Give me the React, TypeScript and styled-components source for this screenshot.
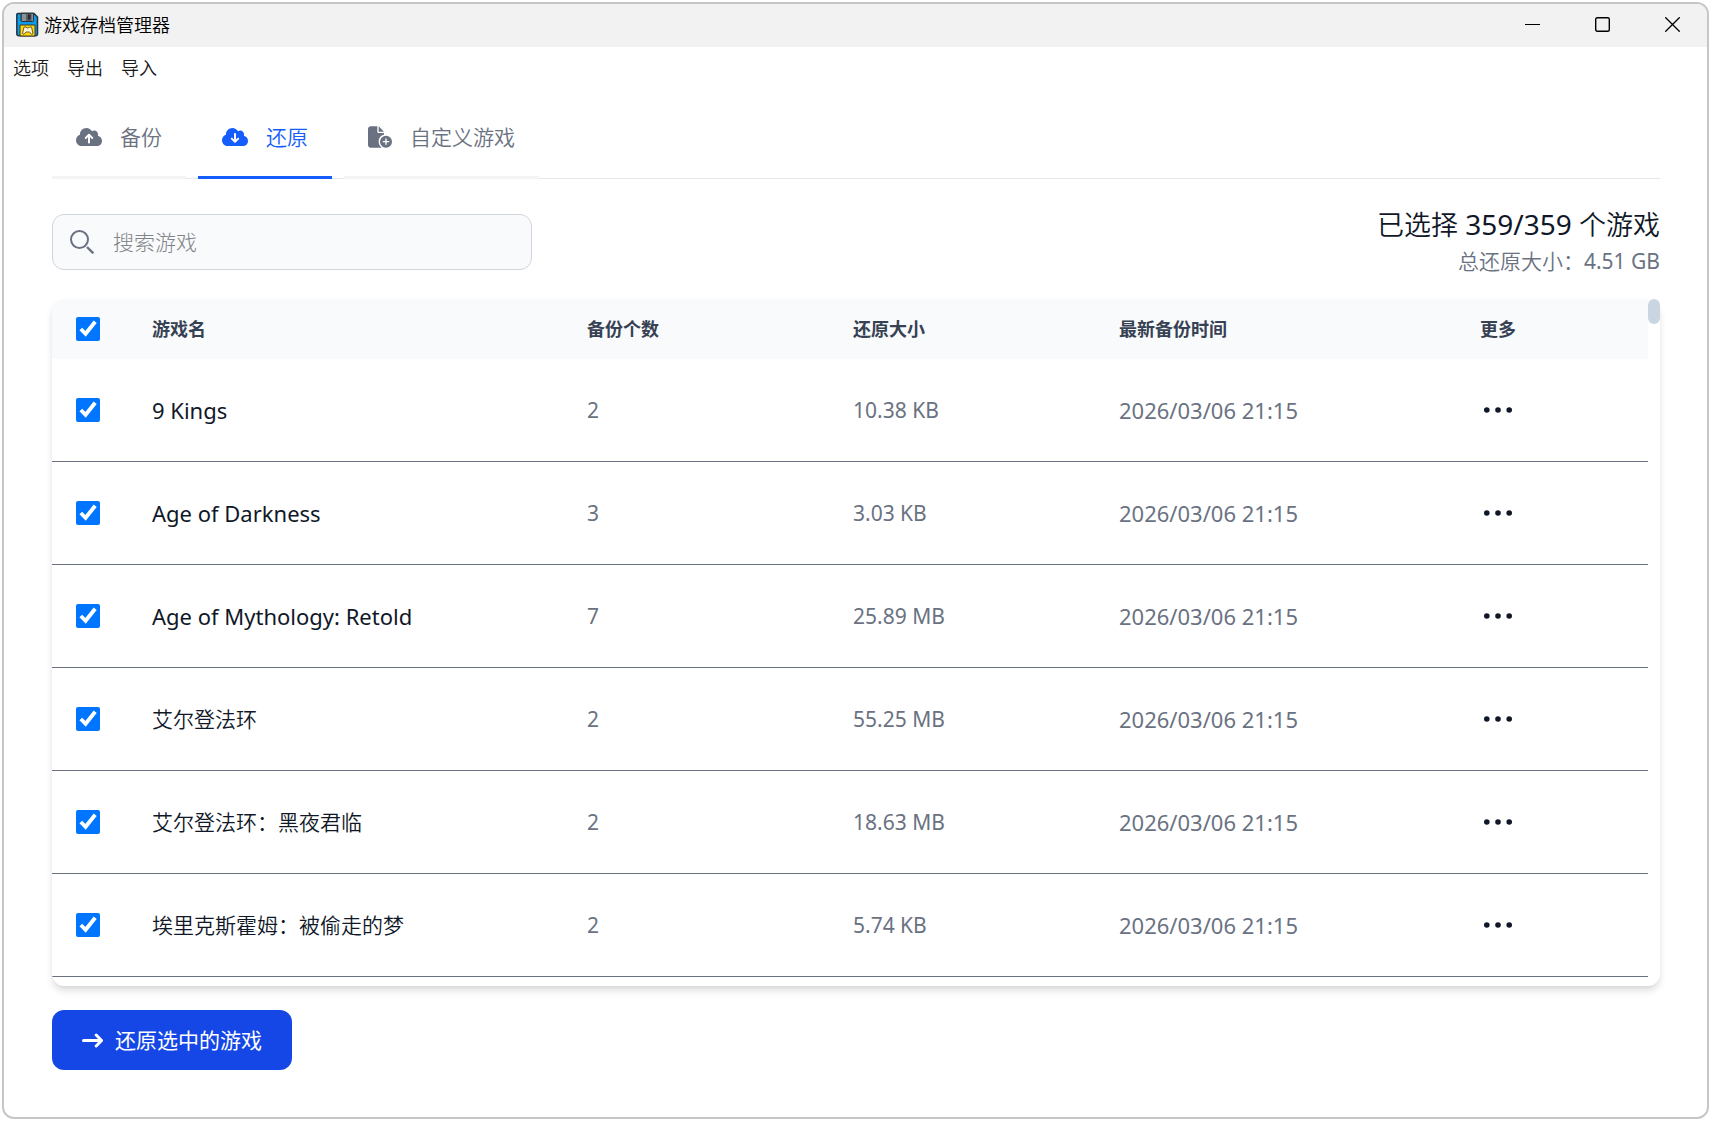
import React, { useState } from "react";
import styled, { createGlobalStyle } from "styled-components";
import { FaCloudArrowUp, FaCloudArrowDown, FaFileCirclePlus } from "react-icons/fa6";

const GlobalStyle = createGlobalStyle`
  *, *::before, *::after { box-sizing: border-box; }
  body {
    margin: 0;
    background: #ffffff;
    font-family: "Noto Sans", "Noto Sans CJK SC", sans-serif;
    color: #101828;
  }
  button, input { font: inherit; color: inherit; }
`;

const Window = styled.div`
  display: flex;
  flex-direction: column;
  height: calc(100vh - 4px);
  min-height: 600px;
  margin: 2px;
  border: 2px solid #c6c6c6;
  border-radius: 12px;
  background: #ffffff;
  overflow: hidden;
`;

const TitleBar = styled.header`
  display: flex;
  align-items: center;
  gap: 5px;
  height: 43px;
  padding: 0 0 2px 12px;
  background: #f2f2f2;
  flex: none;
`;

const Title = styled.h1`
  flex: 1;
  margin: 0;
  font-size: 18px;
  line-height: 24px;
  font-weight: 350;
  color: #000000;
`;

const CaptionButtons = styled.div`
  display: flex;
`;

const CaptionButton = styled.button`
  display: flex;
  align-items: center;
  justify-content: center;
  width: 70px;
  height: 40px;
  padding: 0;
  border: 0;
  background: transparent;
  color: #000000;
`;

const MenuBar = styled.nav`
  display: flex;
  gap: 18px;
  padding: 9px 9px 7px;
  flex: none;
`;

const MenuItem = styled.button`
  padding: 0;
  border: 0;
  background: transparent;
  font-size: 18px;
  line-height: 24px;
  font-weight: 350;
  color: #1b1b1b;
`;

const Main = styled.main`
  display: flex;
  flex-direction: column;
  flex: 1;
  min-height: 0;
  padding: 12px 47px 47px 48px;
`;

const Tabs = styled.div`
  display: flex;
  gap: 12px;
  box-shadow: inset 0 -1px 0 #e5e7eb;
  flex: none;
`;

const Tab = styled.button<{ $active?: boolean }>`
  display: flex;
  align-items: center;
  gap: 18px;
  height: 80px;
  padding: 0 24px 2px;
  border: 0;
  border-bottom: 3px solid ${(p) => (p.$active ? "#155dfc" : "#f3f4f6")};
  background: transparent;
  color: ${(p) => (p.$active ? "#155dfc" : "#6a7282")};
  font-size: 21px;
  line-height: 30px;
  font-weight: 350;
`;

const Toolbar = styled.div`
  display: flex;
  align-items: center;
  justify-content: space-between;
  height: 120px;
  flex: none;
`;

const SearchField = styled.label`
  display: flex;
  align-items: center;
  align-self: flex-end;
  gap: 19px;
  width: 480px;
  height: 56px;
  margin-bottom: 29px;
  padding: 0 17px;
  border: 1px solid #d1d5dc;
  border-radius: 12px;
  background: #f9fafb;
  color: #6a7282;
`;

const SearchInput = styled.input`
  flex: 1;
  min-width: 0;
  padding: 0;
  border: 0;
  outline: 0;
  background: transparent;
  font-size: 21px;
  line-height: 30px;
  font-weight: 300;
  color: #101828;
  &::placeholder { color: #808389; opacity: 1; }
`;

const Summary = styled.div`
  text-align: right;
  font-weight: 350;
`;

const SelectedCount = styled.h2`
  margin: 0;
  font-size: 27px;
  line-height: 42px;
  font-weight: 350;
`;

const TotalSize = styled.p`
  margin: 0;
  font-size: 21px;
  line-height: 30px;
  color: #6a7282;
`;

const Figures = styled.span<{ $large?: boolean }>`
  font-size: ${(p) => (p.$large ? "28px" : "21px")};
  font-weight: 400;
`;

const TableCard = styled.div`
  display: flex;
  flex: 1;
  min-height: 0;
  border-radius: 12px;
  background: #ffffff;
  box-shadow: 0 6px 9px -1px rgba(0, 0, 0, 0.1), 0 3px 6px -2px rgba(0, 0, 0, 0.1);
`;

const TableViewport = styled.div`
  flex: 1;
  min-width: 0;
  border-radius: 12px 0 0 12px;
  overflow: hidden;
`;

const ScrollTrack = styled.div`
  width: 12px;
  flex: none;
`;

const ScrollThumb = styled.div`
  height: 25px;
  border-radius: 6px;
  background: #cad5e2;
`;

const Table = styled.table`
  width: 100%;
  table-layout: fixed;
  border-collapse: separate;
  border-spacing: 0;
  text-align: left;
`;

const Col = styled.col<{ $width: string }>`
  width: ${(p) => p.$width};
`;

const HeadCell = styled.th`
  height: 60px;
  padding: 0 24px;
  background: #f9fafb;
  font-size: 18px;
  line-height: 24px;
  font-weight: 700;
  color: #364153;
`;

const Cell = styled.td<{ $strong?: boolean; $wide?: boolean }>`
  height: 103px;
  padding: 0 24px;
  border-bottom: 1px solid #6a7282;
  font-size: ${(p) => (p.$wide ? "22px" : "21px")};
  line-height: 30px;
  color: ${(p) => (p.$strong ? "#101828" : "#6a7282")};
  white-space: nowrap;
  &:lang(zh) { font-weight: 350; }
`;

const Checkbox = styled.input`
  display: block;
  width: 24px;
  height: 24px;
  margin: 0;
  accent-color: #0075ff;
`;

const MoreButton = styled.button`
  display: flex;
  align-items: center;
  padding: 0;
  border: 0;
  background: transparent;
  color: #101828;
`;

const RestoreButton = styled.button`
  display: flex;
  align-items: center;
  align-self: flex-start;
  gap: 12px;
  height: 60px;
  margin-top: 24px;
  padding: 0 30px;
  border: 0;
  border-radius: 12px;
  background: #1447e6;
  color: #ffffff;
  font-size: 21px;
  line-height: 30px;
  flex: none;
`;

const AppIcon = () => (
  <svg width="23" height="25" viewBox="0 0 23 25" aria-hidden="true">
    <path d="M2 1.5h16l3.5 3.5v17a1.8 1.8 0 0 1-1.8 1.8H2.6a1.8 1.8 0 0 1-1.8-1.8V2.5A1 1 0 0 1 2 1.500z" fill="#0c9bea" stroke="#27343f" strokeWidth="1.500" />
    <path d="M5 1.200h12.500v7.300a1 1 0 0 1-1 1H6a1 1 0 0 1-1-1z" fill="#5b5f63" stroke="#27343f" />
    <path d="M6 2h4v7H6zM15.500 2h1.500v7h-1.500z" fill="#8c9195" />
    <rect x="12" y="2.500" width="2.500" height="5" fill="#24292e" />
    <path d="M4 13h15v11H4z" fill="#ffd90d" stroke="#3b3a28" />
    <path d="M8 15h2l1 1h1.500l1-1h2l1.500 6.500-1.500.8-2-2.300h-3.500l-2 2.300-1.500-.8z" fill="#fff3d4" stroke="#6f5d28" />
  </svg>
);

const MinimizeIcon = () => (
  <svg width="15" height="15" viewBox="0 0 15 15" fill="none" stroke="currentColor" aria-hidden="true">
    <path d="M0 7.500h15" />
  </svg>
);

const MaximizeIcon = () => (
  <svg width="15" height="15" viewBox="0 0 15 15" fill="none" stroke="currentColor" strokeWidth="1.400" aria-hidden="true">
    <rect x=".7" y=".7" width="13.600" height="13.600" rx="1.500" />
  </svg>
);

const CloseIcon = () => (
  <svg width="15" height="15" viewBox="0 0 15 15" fill="none" stroke="currentColor" strokeWidth="1.300" aria-hidden="true">
    <path d="M.3.3l14.400 14.400M14.700.3L.3 14.700" />
  </svg>
);

const SearchIcon = () => (
  <svg width="24" height="24" viewBox="0 0 24 24" fill="none" stroke="currentColor" strokeWidth="2" aria-hidden="true">
    <circle cx="9.500" cy="9.500" r="8.500" />
    <path d="M17 17l6.300 6.300" strokeWidth="2.400" />
  </svg>
);

const MoreIcon = () => (
  <svg width="36" height="36" viewBox="0 0 36 36" fill="currentColor" aria-hidden="true">
    <circle cx="6.800" cy="18" r="2.800" />
    <circle cx="18" cy="18" r="2.800" />
    <circle cx="29.200" cy="18" r="2.800" />
  </svg>
);

const ArrowIcon = () => (
  <svg width="21" height="15" viewBox="0 0 21 15" fill="none" stroke="currentColor" strokeWidth="3" strokeLinecap="round" strokeLinejoin="round" aria-hidden="true">
    <path d="M1.500 7.500h18M14.200 2l5.300 5.500L14.200 13" />
  </svg>
);

const games = [
  { name: "9 Kings", lang: "en", backups: 2, size: "10.38 KB" },
  { name: "Age of Darkness", lang: "en", backups: 3, size: "3.03 KB" },
  { name: "Age of Mythology: Retold", lang: "en", backups: 7, size: "25.89 MB" },
  { name: "艾尔登法环", lang: "zh", backups: 2, size: "55.25 MB" },
  { name: "艾尔登法环：黑夜君临", lang: "zh", backups: 2, size: "18.63 MB" },
  { name: "埃里克斯霍姆：被偷走的梦", lang: "zh", backups: 2, size: "5.74 KB" },
];

const latestBackup = "2026/03/06 21:15";

export default function App() {
  const [checked, setChecked] = useState(games.map(() => true));
  const toggle = (index: number) =>
    setChecked((values) => values.map((value, i) => (i === index ? !value : value)));
  const allChecked = checked.every(Boolean);

  return (
    <>
      <GlobalStyle />
      <Window>
        <TitleBar>
          <AppIcon />
          <Title>游戏存档管理器</Title>
          <CaptionButtons>
            <CaptionButton aria-label="最小化"><MinimizeIcon /></CaptionButton>
            <CaptionButton aria-label="最大化"><MaximizeIcon /></CaptionButton>
            <CaptionButton aria-label="关闭"><CloseIcon /></CaptionButton>
          </CaptionButtons>
        </TitleBar>
        <MenuBar>
          <MenuItem>选项</MenuItem>
          <MenuItem>导出</MenuItem>
          <MenuItem>导入</MenuItem>
        </MenuBar>
        <Main>
          <Tabs role="tablist">
            <Tab role="tab" aria-selected={false}><FaCloudArrowUp size={26} />备份</Tab>
            <Tab role="tab" aria-selected $active><FaCloudArrowDown size={26} />还原</Tab>
            <Tab role="tab" aria-selected={false}><FaFileCirclePlus size={24} />自定义游戏</Tab>
          </Tabs>
          <Toolbar>
            <SearchField>
              <SearchIcon />
              <SearchInput type="text" placeholder="搜索游戏" aria-label="搜索游戏" />
            </SearchField>
            <Summary>
              <SelectedCount>已选择<Figures $large> 359/359 </Figures>个游戏</SelectedCount>
              <TotalSize>总还原大小：<Figures>4.51 GB</Figures></TotalSize>
            </Summary>
          </Toolbar>
          <TableCard>
            <TableViewport>
              <Table>
                <colgroup>
                  <Col $width="76px" />
                  <Col $width="435px" />
                  <Col $width="266px" />
                  <Col $width="266px" />
                  <Col $width="361px" />
                  <Col $width="auto" />
                </colgroup>
                <thead>
                  <tr>
                    <HeadCell>
                      <Checkbox
                        type="checkbox"
                        aria-label="全选"
                        checked={allChecked}
                        onChange={() => setChecked(games.map(() => !allChecked))}
                      />
                    </HeadCell>
                    <HeadCell>游戏名</HeadCell>
                    <HeadCell>备份个数</HeadCell>
                    <HeadCell>还原大小</HeadCell>
                    <HeadCell>最新备份时间</HeadCell>
                    <HeadCell>更多</HeadCell>
                  </tr>
                </thead>
                <tbody>
                  {games.map((game, index) => (
                    <tr key={game.name}>
                      <Cell>
                        <Checkbox
                          type="checkbox"
                          aria-label={game.name}
                          checked={checked[index]}
                          onChange={() => toggle(index)}
                        />
                      </Cell>
                      <Cell $strong $wide={game.lang === "en"} lang={game.lang}>{game.name}</Cell>
                      <Cell>{game.backups}</Cell>
                      <Cell>{game.size}</Cell>
                      <Cell $wide>{latestBackup}</Cell>
                      <Cell>
                        <MoreButton aria-label="更多"><MoreIcon /></MoreButton>
                      </Cell>
                    </tr>
                  ))}
                </tbody>
              </Table>
            </TableViewport>
            <ScrollTrack><ScrollThumb /></ScrollTrack>
          </TableCard>
          <RestoreButton><ArrowIcon />还原选中的游戏</RestoreButton>
        </Main>
      </Window>
    </>
  );
}
